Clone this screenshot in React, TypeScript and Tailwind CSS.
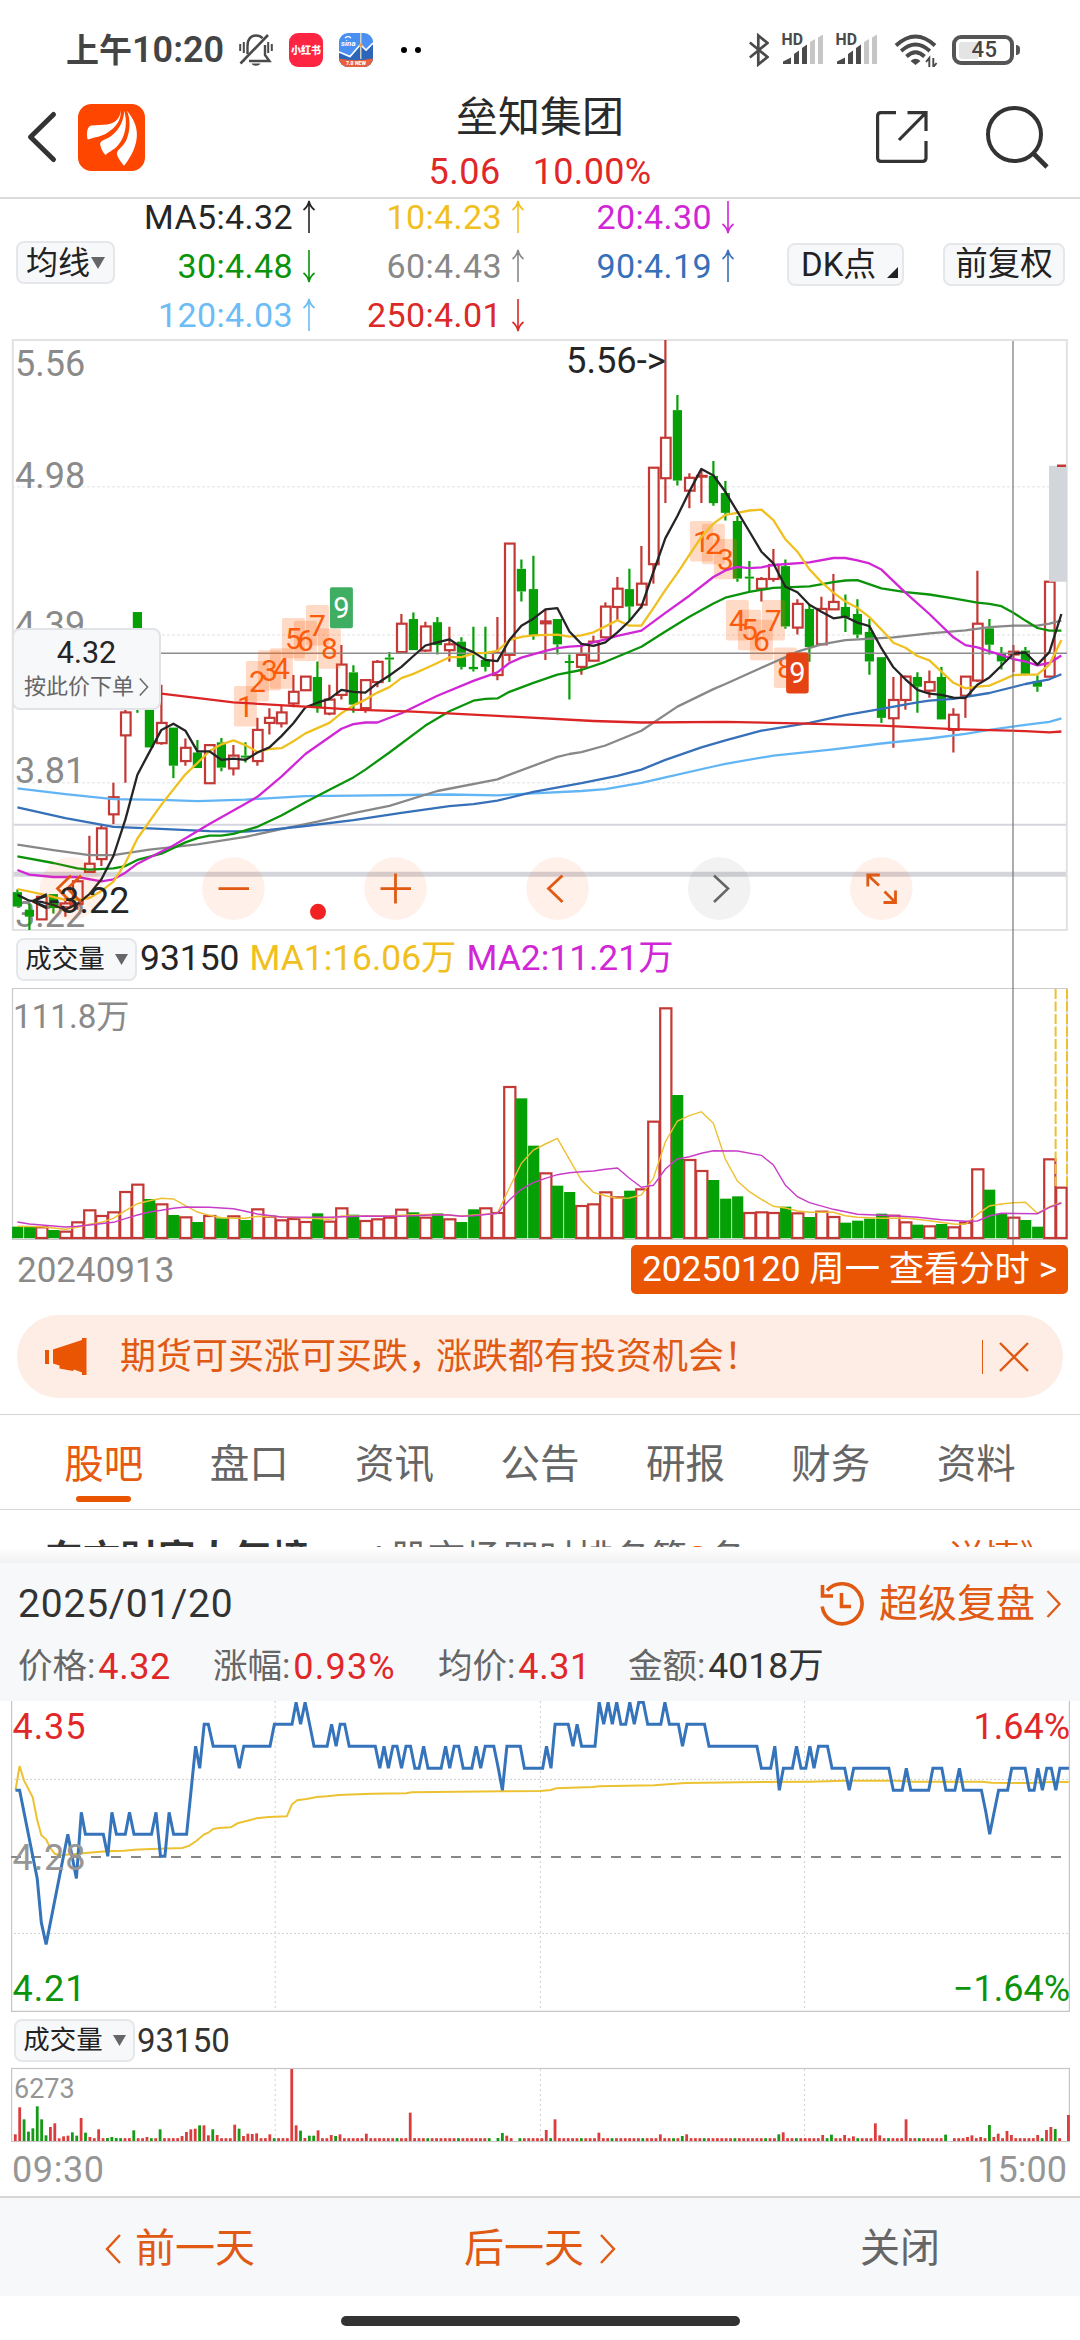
import React from "react";

const RED = "#c43835";
const GREEN = "#05a005";

type Candle = ["r" | "g", number, number, number, number];

/* [direction, body top, body bottom, wick top, wick bottom] in chart units */
const candles: Candle[] = [
  ["g", 1445, 1482, 1438, 1482], ["g", 1490, 1508, 1475, 1542], ["r", 1457, 1515, 1457, 1515], ["g", 1450, 1486, 1450, 1500],
  ["r", 1474, 1484, 1460, 1508], ["r", 1417, 1475, 1410, 1490], ["r", 1372, 1393, 1300, 1395], ["r", 1281, 1360, 1272, 1378],
  ["r", 1201, 1245, 1164, 1270], ["r", 983, 1042, 975, 1164], ["g", 725, 960, 725, 984], ["g", 940, 1073, 940, 1073],
  ["r", 1010, 1062, 912, 1066], ["g", 1022, 1120, 1022, 1152], ["r", 1074, 1108, 1050, 1120], ["g", 1086, 1126, 1054, 1126],
  ["r", 1067, 1165, 1067, 1165], ["g", 1060, 1125, 1049, 1134], ["r", 1094, 1127, 1067, 1145], ["g", 1094, 1099, 1060, 1112],
  ["r", 1028, 1108, 997, 1120], ["r", 997, 1010, 972, 1040], ["r", 983, 1011, 965, 1022], ["r", 930, 960, 887, 970],
  ["r", 891, 926, 891, 926], ["g", 892, 970, 852, 984], ["r", 950, 986, 912, 990], ["r", 860, 938, 810, 950],
  ["g", 880, 963, 862, 984], ["r", 900, 972, 900, 984], ["r", 853, 905, 848, 918], ["g", 842, 847, 828, 905],
  ["r", 755, 828, 730, 830], ["g", 743, 823, 726, 823], ["r", 762, 824, 750, 828], ["g", 751, 810, 738, 834],
  ["r", 808, 823, 763, 853], ["g", 801, 866, 790, 873], ["g", 866, 872, 763, 878], ["g", 848, 866, 763, 878],
  ["r", 830, 887, 738, 900], ["r", 549, 835, 549, 852], ["g", 614, 672, 590, 698], ["g", 666, 786, 580, 796],
  ["r", 749, 754, 720, 848], ["g", 743, 808, 743, 834], ["g", 851, 856, 834, 950], ["r", 835, 866, 808, 886],
  ["r", 801, 850, 786, 852], ["r", 711, 790, 700, 790], ["r", 665, 712, 635, 748], ["g", 666, 711, 614, 748],
  ["r", 652, 706, 555, 716], ["r", 354, 602, 354, 652], ["r", 277, 381, 26, 445], ["g", 206, 387, 167, 400],
  ["r", 380, 413, 368, 458], ["r", 375, 377, 358, 445], ["g", 375, 445, 337, 452], ["g", 419, 470, 388, 490],
  ["g", 491, 639, 478, 647], ["g", 634, 639, 594, 672], ["r", 640, 665, 635, 698], ["r", 604, 640, 563, 647],
  ["g", 607, 762, 590, 768], ["r", 704, 765, 692, 783], ["g", 717, 815, 706, 853], ["r", 717, 808, 686, 810],
  ["r", 699, 718, 627, 718], ["g", 712, 738, 680, 776], ["g", 730, 783, 692, 792], ["g", 776, 852, 743, 886],
  ["g", 841, 997, 841, 1010], ["r", 951, 998, 892, 1074], ["r", 891, 951, 888, 976], ["g", 892, 917, 880, 984],
  ["r", 905, 927, 875, 945], ["g", 892, 1001, 866, 1001], ["r", 989, 1028, 972, 1086], ["r", 891, 940, 891, 997],
  ["r", 755, 901, 619, 905], ["g", 767, 809, 743, 834], ["g", 830, 852, 815, 873], ["r", 827, 834, 810, 880],
  ["g", 824, 884, 815, 888], ["g", 902, 917, 888, 930], ["r", 647, 891, 647, 891],
];

/* flat lists of index,value pairs */
const maLines: { color: string; pts: number[] }[] = [
  { color: "#62b5f5", pts: [0, 1178, 4, 1193, 8, 1206, 12, 1208, 15, 1211, 19, 1207, 24, 1198, 28, 1197, 36, 1194, 40, 1196, 43, 1191, 47, 1185, 49, 1180, 52, 1164, 54, 1150, 58, 1122, 59, 1115, 63, 1094, 68, 1078, 72, 1063, 76, 1050, 79, 1038, 81, 1028, 84, 1015, 86, 1007, 87, 998] },
  { color: "#888888", pts: [0, 1323, 3, 1337, 6, 1350, 8, 1350, 11, 1336, 15, 1322, 19, 1303, 22, 1283, 25, 1264, 28, 1242, 31, 1223, 35, 1185, 40, 1155, 45, 1097, 46, 1090, 47, 1085, 49, 1068, 52, 1030, 55, 968, 58, 923, 59, 910, 62, 868, 65, 827, 67, 808, 69, 797, 73, 790, 76, 780, 79, 772, 81, 764, 83, 760, 85, 760, 86, 755, 87, 747] },
  { color: "#3670b8", pts: [0, 1227, 4, 1255, 8, 1277, 11, 1281, 16, 1288, 19, 1289, 21, 1285, 24, 1275, 28, 1260, 32, 1241, 36, 1224, 38, 1219, 40, 1210, 43, 1187, 47, 1165, 50, 1146, 52, 1130, 54, 1105, 57, 1073, 59, 1055, 62, 1030, 66, 1010, 69, 990, 72, 974, 75, 957, 76, 953, 78, 948, 81, 933, 84, 910, 86, 898, 87, 885] },
  { color: "#0b930b", pts: [0, 1353, 3, 1370, 5, 1384, 6, 1387, 8, 1384, 9, 1378, 10, 1362, 12, 1346, 14, 1317, 15, 1306, 16, 1300, 17, 1300, 18, 1295, 20, 1277, 22, 1248, 24, 1214, 26, 1182, 28, 1150, 29, 1130, 31, 1086, 34, 1017, 36, 980, 38, 953, 39, 948, 40, 947, 41, 930, 43, 907, 45, 886, 47, 874, 49, 853, 51, 827, 52, 814, 54, 775, 56, 737, 58, 703, 59, 688, 61, 673, 63, 663, 66, 659, 68, 648, 69, 644, 70, 643, 72, 664, 74, 674, 76, 680, 78, 690, 80, 701, 81, 704, 82, 710, 83, 727, 84, 747, 85, 766, 86, 773, 87, 773] },
  { color: "#d026d6", pts: [0, 1388, 1, 1400, 3, 1406, 5, 1406, 7, 1417, 8, 1412, 9, 1395, 10, 1372, 13, 1325, 16, 1270, 19, 1218, 20, 1200, 22, 1148, 24, 1090, 27, 1025, 28, 1013, 29, 1009, 30, 1009, 32, 985, 35, 940, 38, 902, 40, 880, 41, 856, 42, 842, 44, 825, 45, 818, 46, 814, 47, 812, 48, 803, 49, 795, 50, 786, 52, 773, 54, 727, 56, 683, 58, 635, 59, 618, 60, 609, 61, 612, 62, 610, 63, 604, 66, 597, 68, 586, 69, 586, 70, 592, 71, 600, 72, 616, 74, 675, 76, 730, 78, 790, 79, 810, 80, 816, 82, 836, 83, 846, 84, 852, 85, 862, 86, 856, 87, 837] },
  { color: "#f0c020", pts: [0, 1437, 2, 1450, 4, 1465, 5, 1465, 6, 1460, 7, 1442, 8, 1418, 9, 1370, 10, 1307, 12, 1220, 14, 1142, 15, 1113, 16, 1083, 17, 1065, 18, 1055, 19, 1067, 20, 1085, 21, 1077, 22, 1075, 23, 1057, 24, 1037, 26, 1010, 27, 985, 28, 965, 29, 950, 30, 932, 31, 918, 32, 895, 33, 884, 34, 870, 35, 856, 36, 841, 37, 841, 38, 832, 39, 830, 40, 825, 41, 797, 42, 789, 43, 785, 45, 783, 46, 788, 47, 785, 48, 777, 49, 762, 50, 746, 51, 760, 52, 760, 53, 715, 54, 668, 55, 625, 56, 578, 57, 532, 58, 498, 59, 475, 60, 470, 61, 464, 62, 462, 63, 489, 64, 538, 65, 570, 66, 615, 67, 648, 68, 675, 69, 698, 70, 714, 71, 738, 72, 770, 73, 804, 74, 817, 75, 838, 76, 849, 77, 878, 78, 907, 79, 921, 80, 917, 81, 914, 82, 901, 83, 887, 84, 886, 85, 886, 86, 860, 87, 797] },
  { color: "#252525", pts: [0, 1452, 1, 1467, 2, 1470, 3, 1478, 4, 1490, 5, 1475, 6, 1450, 7, 1412, 8, 1352, 9, 1258, 10, 1143, 11, 1085, 12, 1028, 13, 1012, 14, 1030, 15, 1083, 16, 1083, 17, 1105, 18, 1102, 19, 1105, 20, 1086, 21, 1073, 22, 1044, 23, 1011, 24, 970, 25, 958, 26, 948, 27, 925, 28, 930, 29, 932, 30, 908, 31, 888, 32, 866, 33, 838, 34, 811, 35, 803, 36, 795, 37, 816, 38, 828, 39, 848, 40, 851, 41, 797, 42, 760, 43, 742, 44, 718, 45, 715, 46, 775, 47, 807, 48, 812, 49, 803, 50, 777, 51, 748, 52, 711, 53, 622, 54, 535, 55, 478, 56, 415, 57, 357, 58, 374, 59, 416, 60, 467, 61, 518, 62, 570, 63, 600, 64, 660, 65, 674, 66, 706, 67, 724, 68, 741, 69, 737, 70, 752, 71, 761, 72, 818, 73, 867, 74, 898, 75, 925, 76, 935, 77, 938, 78, 945, 79, 946, 80, 912, 81, 893, 82, 863, 83, 832, 84, 829, 85, 860, 86, 828, 87, 730] },
  { color: "#db2424", pts: [12, 935, 18, 957, 25, 970, 28, 976, 33, 981, 40, 992, 48, 1005, 52, 1009, 59, 1007, 65, 1011, 72, 1017, 78, 1026, 84, 1031, 86, 1034, 87, 1032] },
];

const volumes =
  "g920 g921 r922 g930 r935 r907 r871 r888 r877 r816 r794 g837 r853 g885 r892 g906 r888 g895 r889 g900 r868 r890 r901 r897 r906 g880 r905 r865 g884 r903 r898 r893 r869 g877 r893 g880 r898 g906 g868 r865 r879 r501 g535 g677 r760 g797 g816 r858 r853 r817 r832 g812 r808 r605 r265 g525 r720 r753 g780 g836 g829 r879 r877 r879 g860 r880 g891 r875 r891 g908 g902 g896 g881 r887 r907 g914 r919 g912 r922 r908 r748 g809 g881 r893 g900 g920 r718 r803".split(" ");

const volMa1 = [0, 919, 2, 920, 3, 924, 4, 928, 5, 922, 6, 913, 7, 907, 8, 895, 9, 872, 10, 851, 11, 842, 12, 835, 13, 837, 14, 857, 15, 876, 16, 886, 17, 893, 18, 895, 19, 895, 20, 889, 22, 890, 24, 894, 26, 898, 27, 888, 29, 888, 31, 887, 33, 884, 35, 883, 37, 888, 39, 883, 40, 880, 41, 803, 42, 730, 43, 690, 44, 672, 45, 655, 46, 718, 47, 780, 48, 817, 49, 827, 50, 835, 51, 834, 52, 825, 53, 775, 54, 665, 55, 603, 56, 587, 57, 575, 58, 610, 59, 718, 60, 783, 61, 815, 62, 838, 63, 859, 64, 864, 65, 873, 66, 877, 68, 877, 69, 887, 70, 892, 72, 895, 74, 894, 76, 902, 78, 912, 79, 913, 80, 883, 81, 858, 82, 852, 83, 848, 84, 847, 85, 880, 86, 860, 87, 847];
const volMa2 = [0, 906, 1, 912, 3, 918, 4, 921, 5, 919, 6, 915, 8, 907, 9, 896, 10, 885, 11, 876, 12, 871, 13, 865, 14, 861, 16, 862, 18, 866, 19, 874, 20, 882, 22, 891, 26, 892, 29, 888, 32, 889, 35, 884, 36, 885, 37, 889, 38, 887, 40, 880, 41, 840, 42, 808, 43, 788, 44, 775, 45, 764, 46, 758, 47, 755, 48, 753, 49, 748, 50, 744, 51, 775, 52, 802, 53, 796, 54, 747, 55, 717, 56, 710, 57, 700, 58, 692, 60, 693, 62, 706, 63, 735, 64, 796, 65, 830, 66, 848, 68, 868, 70, 883, 73, 887, 75, 892, 77, 899, 79, 904, 80, 903, 81, 888, 82, 880, 85, 881, 86, 862, 87, 849];

/* time offset, price level (one level is one cent below 4.35) */
const priceLine = [45, 4, 57, 4, 108, 8, 120, 10, 134, 11, 197, 6, 222, 8, 236, 5, 248, 6, 300, 6, 313, 7, 325, 5, 338, 6, 364, 6, 376, 5, 389, 6, 440, 6, 453, 5, 466, 7, 479, 7, 491, 5, 504, 6, 542, 6, 555, 4, 568, 2, 580, 3, 593, 1, 605, 1, 619, 2, 682, 2, 695, 3, 708, 2, 784, 2, 797, 1, 848, 1, 860, 0, 873, 1, 886, 0, 899, 1, 912, 2, 950, 2, 963, 1, 976, 2, 988, 1, 1001, 1, 1014, 2, 1090, 2, 1103, 3, 1115, 2, 1128, 3, 1141, 2, 1153, 2, 1166, 3, 1179, 2, 1192, 2, 1205, 3, 1217, 3, 1230, 2, 1243, 3, 1281, 3, 1294, 2, 1306, 3, 1319, 2, 1332, 2, 1345, 3, 1370, 3, 1383, 2, 1396, 3, 1409, 2, 1434, 2, 1447, 3, 1459, 4, 1472, 2, 1511, 2, 1523, 3, 1576, 3, 1587, 2, 1600, 3, 1612, 1, 1650, 1, 1664, 2, 1676, 1, 1689, 2, 1728, 2, 1740, 0, 1753, 1, 1766, 0, 1778, 1, 1791, 0, 1803, 1, 1817, 1, 1829, 0, 1842, 1, 1855, 0, 1868, 0, 1881, 1, 1919, 1, 1931, 0, 1944, 1, 1970, 1, 1982, 2, 1995, 1, 2046, 1, 2059, 2, 2198, 2, 2211, 3, 2238, 3, 2250, 2, 2263, 4, 2275, 3, 2301, 3, 2313, 2, 2326, 3, 2340, 3, 2352, 2, 2364, 3, 2377, 2, 2403, 2, 2416, 3, 2453, 3, 2466, 4, 2479, 3, 2581, 3, 2594, 4, 2620, 4, 2632, 3, 2645, 4, 2697, 4, 2709, 3, 2735, 3, 2747, 4, 2773, 4, 2786, 3, 2798, 4, 2850, 4, 2863, 5, 2874, 6, 2887, 5, 2900, 4, 2926, 4, 2938, 3, 2977, 3, 2989, 4, 3003, 4, 3014, 3, 3027, 4, 3040, 3, 3053, 3, 3066, 4, 3078, 3, 3104, 3];
const avgLine = [45, 300, 57, 228, 70, 272, 95, 322, 108, 390, 120, 436, 134, 448, 146, 474, 160, 492, 175, 496, 210, 493, 248, 489, 310, 484, 360, 482, 390, 479, 440, 477, 530, 474, 550, 467, 570, 453, 593, 433, 605, 428, 619, 417, 635, 414, 670, 412, 690, 400, 745, 385, 780, 381, 833, 379, 848, 343, 863, 331, 890, 327, 920, 321, 950, 319, 985, 315, 1040, 313, 1080, 311, 1180, 310, 1195, 307, 1460, 304, 1568, 303, 1600, 300, 1615, 295, 1720, 291, 1740, 289, 1900, 286, 1990, 279, 2150, 277, 2350, 275, 2400, 274, 2450, 272, 2600, 272, 2650, 275, 2850, 275, 2880, 278, 2990, 279, 3050, 276, 3104, 276];

const minuteSpikes =
  "r22:403 r28:322 g35:358 g41:395 g48:385 g54:319 g60:358 g67:406 r73:381 r80:370 r86:415 r92:409 r99:407 g105:397 g111:407 r118:354 g124:398 r131:411 r143:388 g156:414 g163:411 g169:414 g194:391 r213:411 g233:388 r265:408 r271:396 r278:388 r284:386 g290:376 r296:376 r303:406 g309:388 r316:405 r341:374 g348:386 r354:408 r360:401 r367:402 r373:400 r392:403 r424:207 r430:376 g437:392 r443:414 g449:407 g456:407 r462:391 r481:405 g487:408 r494:403 r532:401 r596:338 x718:422 g724:414 g730:399 r736:407 x749:422 r794:390 r807:358 r870:398 r960:403 g991:408 r997:403 g1132:403 r1138:397 r1195:405 g1208:404 r1227:405 r1240:409 r1272:370 r1278:406 r1316:358 g1374:404 x1380:422 r1405:411 r1412:406 r1424:411 g1437:375 r1444:411 r1450:401 r1463:393 r1469:405 r1507:405 r1520:390 r1526:381 g1533:387 x1545:422 r1551:345".split(" ");

const cx = (i: number) => 17.4 + 12 * i;
const ky = (v: number) => 330 + v / 2.5705;
const vy = (v: number) => 920 + v / 3;
const toPoints = (pts: number[], fx: (n: number) => number, fy: (n: number) => number) => {
  const out: string[] = [];
  for (let i = 0; i < pts.length; i += 2) out.push(`${fx(pts[i]).toFixed(1)},${fy(pts[i + 1]).toFixed(1)}`);
  return out.join(" ");
};

const badges: [number, number, string][] = [
  [19, 967, "1"], [20, 903, "2"], [21, 875, "3"], [22, 870, "4"], [23, 792, "5"], [24, 799, "6"], [25, 759, "7"], [26, 819, "8"],
  [57, 543, "1"], [58, 550, "2"], [59, 589, "3"], [60, 746, "4"], [61, 771, "5"], [62, 797, "6"], [63, 746, "7"], [64, 868, "8"],
];

function KLineChart() {
  return (
    <svg className="block h-[594px] w-[1080px]" viewBox="0 338 1080 594">
      <g fill="none" stroke="#ececec" strokeWidth="1.5" strokeDasharray="3 2">
        <path d={`M12 ${ky(403)}H1067M12 ${ky(784)}H1067M12 ${ky(1164)}H1067`} />
      </g>
      <path d="M12.5 824.8H1067" stroke="#d4d5dc" strokeWidth="2" />
      <path d="M12.5 874.3H1067" stroke="#d4d5da" strokeWidth="5" />
      <rect x="12.8" y="340" width="1054" height="590" fill="none" stroke="#e2e2e2" strokeWidth="2" />
      <g fill="#8a8a8a" fontSize="36">
        <text x="15" y="375.5">5.56</text>
        <text x="15" y="487.5">4.98</text>
        <text x="15" y="637">4.39</text>
        <text x="15" y="783">3.81</text>
        <text x="15" y="926.5">3.22</text>
      </g>
      {candles.map(([dir, t, b, hi, lo], i) => {
        const c = dir === "r" ? RED : GREEN;
        const x = cx(i);
        return (
          <g key={i}>
            <path d={`M${x} ${ky(hi)}V${ky(t)}M${x} ${ky(b)}V${ky(lo)}`} stroke={c} strokeWidth="2.2" />
            {dir === "g" ? (
              <rect x={x - 4.6} y={ky(t)} width="9.2" height={ky(b) - ky(t)} fill={c} />
            ) : (
              <rect x={x - 4.4} y={ky(t)} width="9.6" height={ky(b) - ky(t)} fill={b - t > 6 ? "#fff" : c} stroke={c} strokeWidth="2.2" />
            )}
          </g>
        );
      })}
      <rect x="1049" y={ky(349)} width="18" height={ky(647) - ky(349)} fill="#d2d6da" />
      <path d={`M1057 ${ky(349)}H1066`} stroke={RED} strokeWidth="2.5" />
      <path d={`M12 ${ky(831)}H1067`} stroke="#8c8c8c" strokeWidth="1.6" />
      {badges.map(([i, v, n], k) => (
        <g key={k}>
          <rect x={cx(i) - 11.5} y={ky(v) - 20.2} width="23" height="40.4" rx="2" fill="#ff6a1a" fillOpacity="0.25" />
          <text x={cx(i)} y={ky(v) + 10.5} textAnchor="middle" fontSize="30" fill="#fa5a0a">{n}</text>
        </g>
      ))}
      <rect x={cx(27) - 11.5} y={ky(714) - 20.5} width="23" height="41" rx="2" fill="#3fae62" />
      <text x={cx(27)} y={ky(714) + 10} textAnchor="middle" fontSize="29" fill="#fff">9</text>
      {maLines.map((l) => (
        <polyline key={l.color} points={toPoints(l.pts, cx, ky)} fill="none" stroke={l.color} strokeWidth="2.3" strokeLinejoin="round" />
      ))}
      <rect x={cx(65) - 11.3} y={ky(882) - 20.5} width="22.6" height="41" rx="3" fill="#e54313" />
      <text x={cx(65)} y={ky(882) + 10} textAnchor="middle" fontSize="29" fill="#fff">9</text>

      <text x="566" y="373" fontSize="36.3" fill="#252525">5.56-&gt;</text>
      {[233.4, 395.5, 557.5, 881.3].map((x) => (
        <circle key={x} cx={x} cy="888.6" r="31.3" fill="#fa5a0a" fillOpacity="0.09" />
      ))}
      <circle cx="719.3" cy="888.6" r="31.3" fill="#444" fillOpacity="0.07" />
      <circle cx="71" cy="888.6" r="31.3" fill="#fa5a0a" fillOpacity="0.09" />
      <g fill="none" stroke="#e05a14" strokeWidth="2.8">
        <path d="M218.5 888.6H249M380.5 888.6H411M395.5 873.5V903.5M562.5 875.5L548.5 888.6L562.5 902" />
        <path d="M71 875.5L57.5 888.6L71 902M81 875.5L67.5 888.6L81 902" />
        <path d="M867.8 886.5V875H879.8M867.8 875L879 885.5M895.5 890.5V902.5H883.5M895.5 902.5L884.5 891.5" />
      </g>
      <path d="M714 875.5L728 888.6L714 902" fill="none" stroke="#666" strokeWidth="2.6" />
      <text x="31" y="913" fontSize="36" fill="#252525">&lt;-3.22</text>
      <circle cx="318" cy="911.8" r="8" fill="#f22222" />
    </svg>
  );
}

function VolumeChart() {
  return (
    <svg className="block h-[258px] w-[1080px]" viewBox="0 986 1080 258">
      <path d="M12.5 1239.4V988.5H1067V1239.4" fill="none" stroke="#cacaca" strokeWidth="1.2" />
      <path d="M12 1239.4H1067.5" stroke="#c8c8c8" strokeWidth="1.2" />
      <text x="13" y="1028" fontSize="33.2" fill="#8a8a8a">111.8万</text>
      {volumes.map((s, i) => {
        const top = vy(Number(s.slice(1)));
        const x = cx(i) + 0.2;
        return s[0] === "g" ? (
          <rect key={i} x={x - 5.5} y={top} width="11.2" height={1238.2 - top} fill={GREEN} />
        ) : (
          <rect key={i} x={x - 5.4} y={top} width={i === 87 ? 10.4 : 11.2} height={1238 - top} fill="#fff" stroke={RED} strokeWidth="2.2" />
        );
      })}
      <path d="M1055.6 989V1186M1067 989V1186" stroke="#ecc030" strokeWidth="2" strokeDasharray="10 2.5" />
      <polyline points={toPoints(volMa1, cx, vy)} fill="none" stroke="#ecc030" strokeWidth="1.4" />
      <polyline points={toPoints(volMa2, cx, vy)} fill="none" stroke="#c83cc8" strokeWidth="1.4" />
    </svg>
  );
}

function MinuteChart() {
  return (
    <svg className="block h-[312px] w-[1080px]" viewBox="0 1701 1080 312">
      <path d="M11.6 1701V2011.4H1069.4V1701" fill="none" stroke="#c6c6c6" strokeWidth="1.2" />
      <path d="M275.2 1701V2011M540.4 1701V2011M804.6 1701V2011" stroke="#cfcfcf" strokeWidth="1" strokeDasharray="2 3" />
      <path d="M14 1779.4H1069M14 1933.4H1069" stroke="#cfcfcf" strokeWidth="1" strokeDasharray="2 2" />
      <path d="M11 1857H1069" stroke="#888" strokeWidth="2" strokeDasharray="10 10" />
      <polyline points={toPoints(avgLine, (n) => n / 2.904, (n) => 1690 + n / 3)} fill="none" stroke="#ecc232" strokeWidth="2" />
      <polyline points={toPoints(priceLine, (n) => n / 2.904, (n) => 1702.2 + n * 22.02)} fill="none" stroke="#3574bb" strokeWidth="3" />
      <g fontSize="36" letterSpacing="0.9">
        <text x="12.5" y="1739.3" fill="#e02828">4.35</text>
        <text x="12.5" y="1870" fill="#969696">4.28</text>
        <text x="12.5" y="2001" fill="#0b930b">4.21</text>
        <text x="1070" y="1739.3" textAnchor="end" fill="#e02828" letterSpacing="0">1.64%</text>
        <text x="1070" y="2001" textAnchor="end" fill="#0b930b" letterSpacing="0">−1.64%</text>
      </g>
    </svg>
  );
}

function MinuteVolume() {
  const bars = Array.from({ length: 241 }, (_, j) => ({ top: 414.5, c: j % 7 === 3 ? "g" : "r" }));
  minuteSpikes.forEach((s) => {
    const [x, top] = s.slice(1).split(":").map(Number);
    const bar = bars[Math.round((x - 22) / 6.371)];
    bar.top = top;
    bar.c = s[0];
  });
  return (
    <svg className="block h-[76px] w-[1080px]" viewBox="0 2067 1080 76">
      <path d="M275.2 2069V2141M540.4 2069V2141M804.6 2069V2141" stroke="#cfcfcf" strokeWidth="1" strokeDasharray="2 3" />
      <rect x="11.6" y="2068.5" width="1057.8" height="73" fill="none" stroke="#c6c6c6" strokeWidth="1.2" />
      {bars.map((b, j) =>
        b.c === "x" ? null : (
          <rect key={j} x={13.9 + j * 4.388} y={2000 + b.top / 3} width="2.8" height={(423 - b.top) / 3} fill={b.c === "r" ? "#dc3c3c" : "#149a14"} />
        )
      )}
      <text x="14" y="2097.6" fontSize="27" fill="#969696">6273</text>
    </svg>
  );
}

function Signal() {
  return (
    <svg className="block h-[34px] w-[42px] overflow-visible" viewBox="0 0 42 34">
      <path d="M1 31V28.5L9 24.5V31Z M12 31V21L17 17.5V31Z M20 31V15L25 11.5V31Z" fill="#4a4a4a" />
      <path d="M28 31V9L33 6V31Z M36 31V4.5L41 1.5V31Z" fill="#c6c6c6" />
      <text x="-0.5" y="12" fontSize="15.8" fontWeight="700" fill="#4a4a4a">HD</text>
    </svg>
  );
}

function StatusBar() {
  return (
    <div className="flex h-[84px] items-center pt-4 text-[#444]">
      <div className="ml-[66px] flex w-[173px] items-center text-[33px] leading-none font-bold whitespace-nowrap">
        上午<span className="text-[36px] font-semibold">10:20</span>
      </div>
      <svg className="h-[34px] w-[34px]" viewBox="0 0 34 34" fill="none" stroke="#4a4a4a" strokeWidth="2.4">
        <path d="M8.5 21V13C8.5 6 12 2.5 17 2.5C19.5 2.5 22 3.5 23.5 5.2M26 12V22L30.5 28H10M5.5 27.5H5" />
        <path d="M1.5 30.5L29 2" strokeWidth="2.6" />
        <path d="M1.2 11V18M4.8 9V20M29.2 9V20M32.8 11V18" strokeWidth="2" />
        <path d="M12.5 30.5H21.5C20 33.5 14 33.5 12.5 30.5Z" fill="#4a4a4a" stroke="none" />
      </svg>
      <div className="ml-4 flex h-[34px] w-[34px] items-center justify-center rounded-[9px] bg-[#fe2543] text-[10px] font-black text-white">
        小红书
      </div>
      <svg className="ml-4 h-[34px] w-[34px] overflow-hidden rounded-[9px]" viewBox="0 0 34 34">
        <rect width="34" height="34" fill="#4a90f2" />
        <path d="M0 20L11 25L22 12L28 18L34 11V34H0Z" fill="#2d66b8" />
        <path d="M0 19L11 23.5L21.5 11.5L27 17L34 10" fill="none" stroke="#fff" strokeWidth="1.6" />
        <path d="M21.8 0V26" stroke="#f4e6c0" strokeWidth="1.2" />
        <circle cx="21.8" cy="12" r="1.8" fill="#f0a030" />
        <path d="M0 25.5Q17 29 34 25.5V34H0Z" fill="#e8603c" />
        <path d="M6 5Q9 2 12 5" fill="none" stroke="#fff" strokeWidth="1.3" />
        <text x="2" y="12.5" fontSize="8" fontStyle="italic" fontWeight="700" fill="#fff">sina</text>
        <text x="17" y="32.2" textAnchor="middle" fontSize="5.2" fontWeight="900" fill="#fff">7.0 NEW</text>
      </svg>
      <div className="ml-[28px] flex gap-[8px]">
        <span className="h-[6px] w-[6px] rounded-full bg-black" />
        <span className="h-[6px] w-[6px] rounded-full bg-black" />
      </div>
      <div className="mr-[60px] ml-auto flex items-center">
        <svg className="mr-[13px] h-[34px] w-[20px]" viewBox="0 0 20 34" fill="none" stroke="#4a4a4a" strokeWidth="2.7">
          <path d="M0.8 9.5L18.5 24L9.3 31.5V2.5L18.5 10L0.8 24.5" />
        </svg>
        <Signal />
        <span className="w-[12px]" />
        <Signal />
        <svg className="mr-[14px] ml-[16px] h-[34px] w-[44px]" viewBox="0 0 44 34" fill="none" stroke="#4a4a4a" strokeWidth="3.8">
          <path d="M2 12.5Q21.5 -5.5 41 12.5M7.2 18Q21.5 5 35.8 18M12.5 23.5Q21.5 15 30.5 23.5" />
          <path d="M16.5 28Q21.5 23.5 26.5 28L21.5 32Z" fill="#4a4a4a" stroke="none" />
          <path d="M35.3 34V25L32 29M39.3 25V34L42.6 30" strokeWidth="1.9" />
        </svg>
        <div className="flex h-[30px] w-[62px] items-center justify-center rounded-[9px] border-4 border-[#555]">
          <div className="flex h-[17px] w-[48px] items-center justify-center rounded-[3px] bg-[linear-gradient(90deg,#e4e4e4_40%,transparent_40%)] pl-[3px] text-[22px] leading-none font-medium tracking-wide">45</div>
        </div>
        <span className="ml-[2px] h-[10px] w-[4px] rounded-r bg-[#555]" />
      </div>
    </div>
  );
}

function Header() {
  return (
    <header className="flex h-[115px] items-center border-b-2 border-[#dcdcdc]">
      <div className="flex w-[300px] items-center pb-[7px]">
        <svg className="ml-[26px] h-[54px] w-[34px]" viewBox="0 0 34 54" fill="none" stroke="#333" strokeWidth="5" strokeLinecap="round" strokeLinejoin="round">
          <path d="M27.5 4.5L4.5 27L27.5 49.5" />
        </svg>
        <svg className="ml-[18px] h-[67px] w-[67px]" viewBox="0 0 200 200">
          <rect width="200" height="200" rx="40" fill="#ff4600" />
          <path d="M128 18C126 42 112 58 88 61L40 64C27 66 24 90 29 106C52 97 68 99 90 84C114 68 129 50 128 18Z" fill="#fff" />
          <path d="M138 20C136 52 124 76 98 96C82 107 68 108 66 118C67 132 76 146 82 152C92 142 112 136 126 114C144 88 147 50 138 20Z" fill="#fff" />
          <path d="M146 20C176 56 186 92 164 142C154 162 144 178 137 184C128 172 116 158 116 146C120 134 136 128 146 104C156 76 157 46 146 20Z" fill="#fff" />
        </svg>
      </div>
      <div className="flex w-[480px] flex-col items-center">
        <h1 className="mt-[5px] text-[42px] leading-[48px] text-[#2a2a2a]">垒知集团</h1>
        <div className="mt-[9px] flex gap-[32px] text-[36px] leading-[42px] text-[#e02828]">
          <span className="tracking-[0.5px]">5.06</span>
          <span className="tracking-[0.3px]">10.00%</span>
        </div>
      </div>
      <div className="flex w-[300px] items-center pb-[8px]">
        <svg className="ml-[94px] h-[56px] w-[56px]" viewBox="0 0 56 56" fill="none" stroke="#333" strokeWidth="3.2">
          <path d="M22 3.6H7Q3.6 3.6 3.6 7V49Q3.6 52.4 7 52.4H48.5Q52 52.4 52 49V32M33.5 3.6H52V22M52 3.6L25 31" />
        </svg>
        <svg className="ml-[54px] h-[66px] w-[66px]" viewBox="0 0 66 66" fill="none" stroke="#333" strokeWidth="4">
          <circle cx="30.5" cy="30.5" r="26.5" />
          <path d="M50 50L63 63" strokeWidth="4.6" />
        </svg>
      </div>
    </header>
  );
}

function Legend({ text, up, cls }: { text: string; up: boolean; cls: string }) {
  return (
    <div className={"flex h-[49px] items-center justify-end text-[34px] leading-none " + cls}>
      <span className="tracking-[0.4px]">{text}</span>
      <svg className={"ml-[9px] h-[34px] w-[14px] " + (up ? "" : "rotate-180")} viewBox="0 0 14 34" fill="none" stroke="currentColor" strokeWidth="1.6">
        <path d="M7 33V2M1.5 10Q6 6.5 7 1Q8 6.5 12.5 10" />
      </svg>
    </div>
  );
}

function Toolbar() {
  return (
    <div className="flex h-[139px] overflow-visible">
      <div className="mt-[42px] ml-4 flex h-[43px] w-[99px] items-center justify-center gap-[1px] rounded-lg border-2 border-[#e6e7ea] bg-[#f7f8fa] text-[32px] leading-none text-[#222]">
        均线
        <svg className="h-[12px] w-[14px]" viewBox="0 0 14 12"><path d="M0 0H14L7 12Z" fill="#666" /></svg>
      </div>
      <div className="-mt-[7px] ml-[15px] grid h-[147px] w-[605px] grid-cols-[186px_209px_210px]">
        <Legend text="MA5:4.32" up cls="text-[#252525]" />
        <Legend text="10:4.23" up cls="text-[#f0c020]" />
        <Legend text="20:4.30" up={false} cls="text-[#d026d6]" />
        <Legend text="30:4.48" up={false} cls="text-[#0b930b]" />
        <Legend text="60:4.43" up cls="text-[#888888]" />
        <Legend text="90:4.19" up cls="text-[#3670b8]" />
        <Legend text="120:4.03" up cls="text-[#6cbcf5]" />
        <Legend text="250:4.01" up={false} cls="text-[#db2828]" />
      </div>
      <div className="mt-[44px] ml-[52px] flex h-[43px] w-[117px] items-center rounded-lg border-2 border-[#e6e7ea] bg-[#f7f8fa] pl-[12px] text-[33px] leading-none text-[#222]">
        DK点
        <svg className="mt-[16px] ml-[11px] h-[11px] w-[11px]" viewBox="0 0 11 11"><path d="M11 0V11H0Z" fill="#222" /></svg>
      </div>
      <div className="mt-[44px] ml-[39px] flex h-[43px] w-[122px] items-center justify-center rounded-lg border-2 border-[#e6e7ea] bg-[#f7f8fa] text-[32.5px] leading-none text-[#222]">
        前复权
      </div>
    </div>
  );
}

function VolumeButton() {
  return (
    <div className="flex h-[43px] w-[121px] items-center justify-center gap-[10px] rounded-lg border-2 border-[#e6e7ea] bg-[#f7f8fa] text-[26.5px] leading-none text-[#222]">
      成交量
      <svg className="h-[11px] w-[13px]" viewBox="0 0 13 11"><path d="M0 0H13L6.5 11Z" fill="#666" /></svg>
    </div>
  );
}

const tabs = ["股吧", "盘口", "资讯", "公告", "研报", "财务", "资料"];

function Chevron({ left = false, cls }: { left?: boolean; cls: string }) {
  return (
    <svg className={cls} viewBox="0 0 16 30" fill="none" stroke="currentColor" strokeWidth="2.4">
      <path d={left ? "M15 1L2 15L15 29" : "M1 1L14 15L1 29"} />
    </svg>
  );
}

function Stat({ label, value, cls }: { label: string; value: string; cls: string }) {
  return (
    <div className={"flex items-center " + cls}>
      <span className="mr-[3px] text-[34.5px] tracking-normal text-[#666]">{label}:</span>
      {value}
    </div>
  );
}

export default function App() {
  return (
    <div className="flex h-[2340px] w-[1080px] flex-col overflow-hidden bg-white font-[Roboto,'Noto_Sans_CJK_SC',sans-serif] whitespace-nowrap">
      <StatusBar />
      <Header />
      <Toolbar />

      <section className="relative h-[908px]">
        <KLineChart />
        <div className="flex h-[54px] items-center pl-4 text-[35.4px] leading-none">
          <VolumeButton />
          <span className="ml-[3px] text-[#252525]">93150</span>
          <span className="ml-[10px] text-[#f0c020]">MA1:16.06万</span>
          <span className="ml-[10px] text-[#d026d6]">MA2:11.21万</span>
        </div>
        <VolumeChart />
        <div className="absolute top-[3px] left-[1012px] h-[904px] w-[2px] bg-[#777]/60" />
        <div className="absolute top-[290px] left-[12px] flex h-[82px] w-[149px] flex-col items-center rounded-lg border-2 border-[#e2e3e6] bg-[#f7f8fa] pt-[6px]">
          <span className="text-[30.5px] leading-[34px] text-[#252525]">4.32</span>
          <div className="mt-[5px] flex items-center gap-[5px] text-[22px] leading-[24px] text-[#666]">
            按此价下单
            <Chevron cls="h-[18px] w-[10px]" />
          </div>
        </div>
      </section>

      <div className="flex h-[69px] items-start justify-between pr-3 pl-[17px] text-[35px] leading-none">
        <span className="mt-[7px] text-[#8a8a8a]">20240913</span>
        <div className="-mt-px flex h-[49px] w-[437px] items-center justify-center rounded-[5px] bg-[#ea5504] text-[35.3px] text-white">
          20250120 周一 查看分时 &gt;
        </div>
      </div>

      <div className="mx-[17px] flex h-[83px] items-center rounded-full bg-[#fdede4] text-[36px] leading-none text-[#e05a14]">
        <svg className="ml-[28px] h-[37px] w-[42px]" viewBox="0 0 42 37" fill="#ea5504">
          <path d="M0 12H4V26H0ZM8 11.5L37 2V0H41.5V37H37V34.5L29 31.5L28 33L14.5 30.5V27.5L8 25.5Z" />
        </svg>
        <span className="ml-[33px]">
          期货可买涨可买跌<span className="-mr-[8px]">，</span>涨跌都有投资机会！
        </span>
        <span className="ml-auto h-[34px] w-[1.5px] bg-[#e05a14]" />
        <svg className="mr-[34px] ml-[16px] h-[30px] w-[30px]" viewBox="0 0 30 30" fill="none" stroke="#e05a14" strokeWidth="2.4">
          <path d="M1 1L29 29M29 1L1 29" />
        </svg>
      </div>

      <nav className="mt-[16px] flex h-[96px] border-y-[1.5px] border-[#d6d6d6] px-[31px] text-[39.5px] leading-none text-[#666]">
        {tabs.map((t, i) => (
          <div key={t} className={"flex flex-1 flex-col items-center pt-[30px] " + (i === 0 ? "text-[#e85a10]" : "")}>
            {t}
            {i === 0 && <span className="mt-[11px] h-[6px] w-[55px] rounded-full bg-[#ea5504]" />}
          </div>
        ))}
      </nav>

      <div className="flex h-[37px] items-start overflow-hidden pt-[31px] pl-[45px] text-[37.7px] leading-none">
        <span className="font-bold text-[#333]">东方财富人气榜</span>
        <span className="ml-[58px] text-[37px] text-[#666]">
          A股市场即时排名第<span className="font-bold text-[#ea5504]">8</span>名
        </span>
        <span className="mr-[24px] ml-auto text-[36px] text-[#e05a14]">详情》</span>
      </div>

      <div className="h-4 bg-linear-to-b from-white to-[#f1f1f2]" />
      <section className="h-[138px] bg-[#f7f8fa] px-[18px] leading-none">
        <div className="flex h-[80px] items-center pt-[2px] text-[39px] text-[#333]">
          <span className="tracking-[0.8px]">2025/01/20</span>
          <svg className="mr-[14px] ml-auto h-[46px] w-[46px] text-[#e05a14]" viewBox="0 0 46 46" fill="none" stroke="currentColor" strokeWidth="3.6">
            <path d="M8 9.5A20 20 0 1 1 3.2 25.5M3.5 4V15H14" />
            <path d="M22.5 12V25.5H32" />
          </svg>
          <span className="text-[#e05a14]">超级复盘</span>
          <Chevron cls="ml-[11px] h-[28px] w-[16px] text-[#e05a14]" />
        </div>
        <div className="flex h-[47px] items-center text-[36px] text-[#e02828]">
          <Stat label="价格" value="4.32" cls="w-[195px] tracking-[0.6px]" />
          <Stat label="涨幅" value="0.93%" cls="w-[225px] tracking-[1.2px]" />
          <Stat label="均价" value="4.31" cls="w-[190px] tracking-[0.6px]" />
          <Stat label="金额" value="4018万" cls="text-[35.5px] text-[#333]" />
        </div>
      </section>

      <MinuteChart />
      <div className="flex h-[54px] items-center pl-[14px] text-[33px] leading-none text-[#333]">
        <VolumeButton />
        <span className="ml-[2px]">93150</span>
      </div>
      <MinuteVolume />
      <div className="flex h-[53px] items-start justify-between pt-[9px] pr-[13px] pl-[12px] text-[36px] leading-none text-[#969696]">
        <span className="tracking-[0.6px]">09:30</span>
        <span>15:00</span>
      </div>

      <footer className="flex h-[100px] items-center border-t-2 border-[#d6d6d6] bg-[#f7f8fa] pt-[3px] text-[40px] leading-none text-[#e05a14]">
        <div className="flex w-[360px] items-center justify-center gap-[14px]">
          <Chevron left cls="h-[30px] w-[16px]" />
          前一天
        </div>
        <div className="flex w-[360px] items-center justify-center gap-[16px]">
          后一天
          <Chevron cls="h-[30px] w-[16px]" />
        </div>
        <div className="w-[360px] text-center text-[#666]">关闭</div>
      </footer>
      <div className="mx-auto mt-[20px] h-[10px] w-[399px] rounded-full bg-[#333]" />
    </div>
  );
}
